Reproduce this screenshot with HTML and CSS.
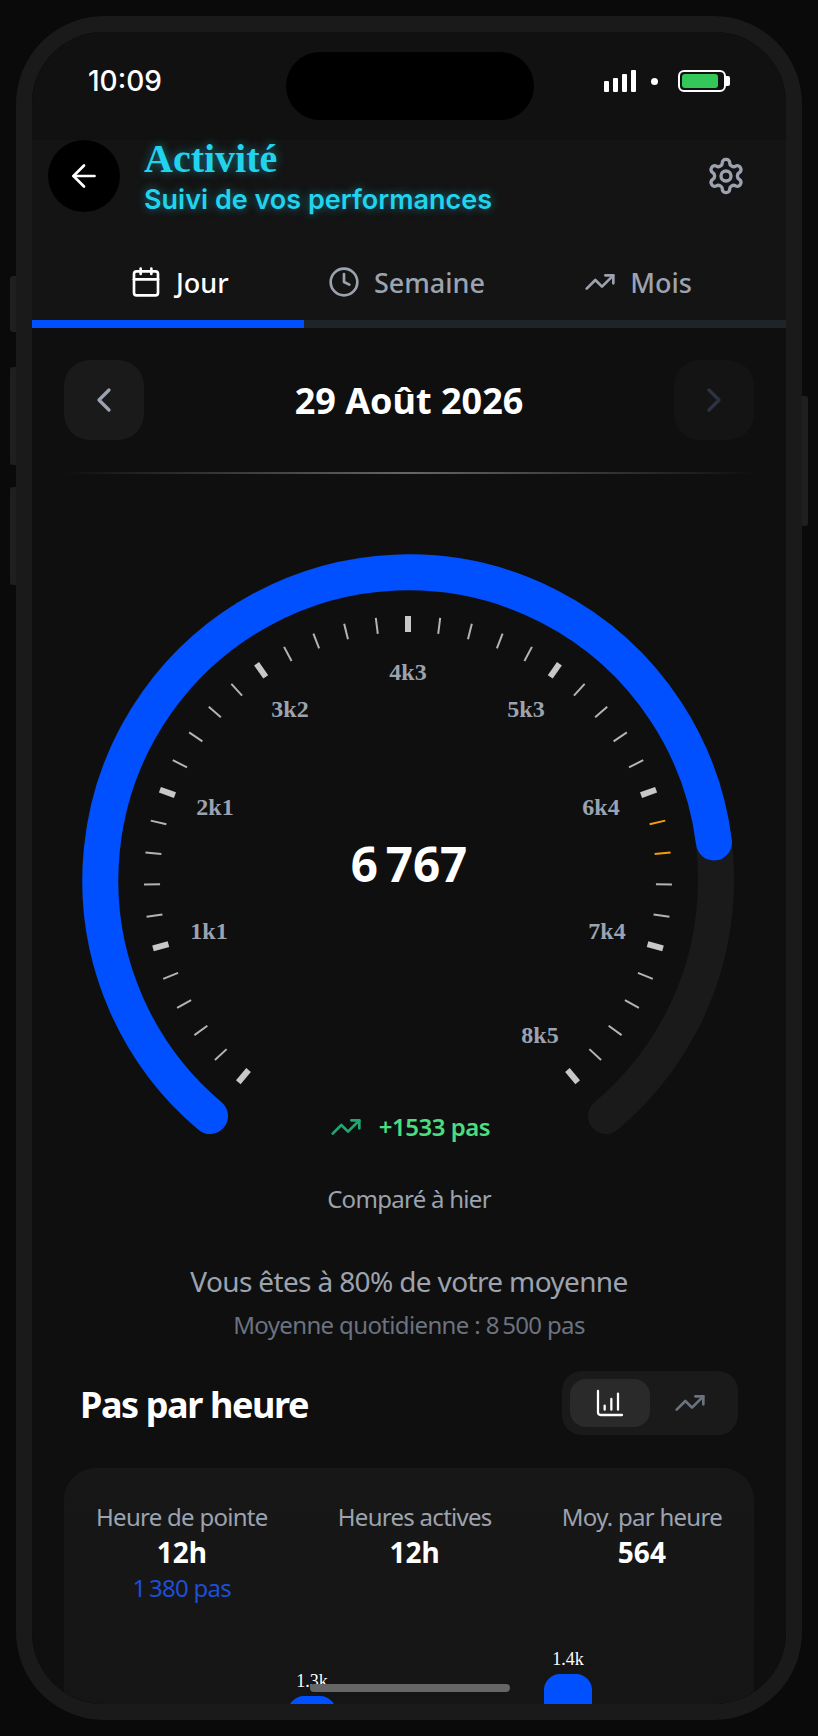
FILE: index.html
```html
<!DOCTYPE html>
<html lang="fr">
<head>
    <meta charset="UTF-8">
    <meta name="viewport" content="width=device-width, initial-scale=1.0">
    <link rel="stylesheet" href="styles.css">
    <title>Activité</title>
</head>
<body>
    <div class="phone">
        <span class="side-btn side-silent"></span>
        <span class="side-btn side-up"></span>
        <span class="side-btn side-down"></span>
        <span class="side-btn side-power"></span>
        <div class="screen">
            <div class="island"></div>
            <div class="home-bar"></div>

            <div class="status-bar">
                <span class="time">10:09</span>
                <div class="status-icons">
                    <svg class="signal" width="32" height="22" viewBox="0 0 32 22" fill="#fff">
                        <rect x="0" y="11" width="5" height="11" rx="1"/>
                        <rect x="9" y="8" width="5" height="14" rx="1"/>
                        <rect x="18" y="4" width="5" height="18" rx="1"/>
                        <rect x="27" y="0" width="5" height="22" rx="1"/>
                    </svg>
                    <span class="dot"></span>
                    <svg width="52" height="22" viewBox="0 0 52 22">
                        <rect x="1" y="1" width="46" height="20" rx="5" fill="none" stroke="#fff" stroke-width="2"/>
                        <rect x="4" y="4" width="36" height="14" rx="3" fill="#34c759"/>
                        <path d="M48 6h2a2 2 0 0 1 2 2v6a2 2 0 0 1-2 2h-2z" fill="#fff"/>
                    </svg>
                </div>
            </div>

            <div class="top-head">
                <button class="back-btn">
                    <svg width="36" height="36" viewBox="0 0 24 24" fill="none" stroke="#fff" stroke-width="1.8" stroke-linecap="round" stroke-linejoin="round">
                        <path d="M19 12H5"/><path d="M12 19l-7-7 7-7"/>
                    </svg>
                </button>
                <div class="head-titles">
                    <h1>Activité</h1>
                    <p>Suivi de vos performances</p>
                </div>
                <svg class="gear" width="40" height="40" viewBox="0 0 24 24" fill="none" stroke="#9ca3af" stroke-width="2" stroke-linecap="round" stroke-linejoin="round">
                    <path d="M12.22 2h-.44a2 2 0 0 0-2 2v.18a2 2 0 0 1-1 1.73l-.43.25a2 2 0 0 1-2 0l-.15-.08a2 2 0 0 0-2.73.73l-.22.38a2 2 0 0 0 .73 2.73l.15.1a2 2 0 0 1 1 1.72v.51a2 2 0 0 1-1 1.74l-.15.09a2 2 0 0 0-.73 2.73l.22.38a2 2 0 0 0 2.73.73l.15-.08a2 2 0 0 1 2 0l.43.25a2 2 0 0 1 1 1.73V20a2 2 0 0 0 2 2h.44a2 2 0 0 0 2-2v-.18a2 2 0 0 1 1-1.73l.43-.25a2 2 0 0 1 2 0l.15.08a2 2 0 0 0 2.73-.73l.22-.39a2 2 0 0 0-.73-2.73l-.15-.08a2 2 0 0 1-1-1.74v-.5a2 2 0 0 1 1-1.74l.15-.09a2 2 0 0 0 .73-2.73l-.22-.38a2 2 0 0 0-2.73-.73l-.15.08a2 2 0 0 1-2 0l-.43-.25a2 2 0 0 1-1-1.73V4a2 2 0 0 0-2-2z"/>
                    <circle cx="12" cy="12" r="3"/>
                </svg>
            </div>

            <div class="tabs">
                <div class="tab tab-active">
                    <svg width="32" height="32" viewBox="0 0 24 24" fill="none" stroke="currentColor" stroke-width="2" stroke-linecap="round" stroke-linejoin="round">
                        <path d="M8 2v4"/><path d="M16 2v4"/><rect x="3" y="4" width="18" height="18" rx="2"/><path d="M3 10h18"/>
                    </svg>
                    <span>Jour</span>
                </div>
                <div class="tab">
                    <svg width="32" height="32" viewBox="0 0 24 24" fill="none" stroke="currentColor" stroke-width="2" stroke-linecap="round" stroke-linejoin="round">
                        <circle cx="12" cy="12" r="10"/><path d="M12 6v6l4 2"/>
                    </svg>
                    <span>Semaine</span>
                </div>
                <div class="tab">
                    <svg width="32" height="32" viewBox="0 0 24 24" fill="none" stroke="currentColor" stroke-width="2" stroke-linecap="round" stroke-linejoin="round">
                        <path d="M22 7l-8.5 8.5-5-5L2 17"/><path d="M16 7h6v6"/>
                    </svg>
                    <span>Mois</span>
                </div>
            </div>
            <div class="tab-track"><div class="tab-fill"></div></div>

            <div class="date-nav">
                <button class="nav-btn">
                    <svg width="40" height="40" viewBox="0 0 24 24" fill="none" stroke="#9ca3af" stroke-width="2" stroke-linecap="round" stroke-linejoin="round"><path d="M15 18l-6-6 6-6"/></svg>
                </button>
                <div class="date-label">29 Août 2026</div>
                <button class="nav-btn nav-off">
                    <svg width="40" height="40" viewBox="0 0 24 24" fill="none" stroke="#2d3340" stroke-width="2" stroke-linecap="round" stroke-linejoin="round"><path d="M9 18l6-6-6-6"/></svg>
                </button>
            </div>
            <div class="divider"></div>

            <div class="gauge">
                <svg width="754" height="620" viewBox="32 520 754 620">
                    <path class="ring ring-track" d="M210 1116 A308 308 0 1 1 606 1116"/>
                    <path class="ring ring-value" d="M210 1116 A308 308 0 1 1 714 842.5"/>

                    <g class="tick major">
                        <line x1="408" y1="616" x2="408" y2="632" transform="rotate(-140 408 880)"/>
                        <line x1="408" y1="616" x2="408" y2="632" transform="rotate(-105 408 880)"/>
                        <line x1="408" y1="616" x2="408" y2="632" transform="rotate(-70 408 880)"/>
                        <line x1="408" y1="616" x2="408" y2="632" transform="rotate(-35 408 880)"/>
                        <line x1="408" y1="616" x2="408" y2="632"/>
                        <line x1="408" y1="616" x2="408" y2="632" transform="rotate(35 408 880)"/>
                        <line x1="408" y1="616" x2="408" y2="632" transform="rotate(70 408 880)"/>
                        <line x1="408" y1="616" x2="408" y2="632" transform="rotate(105 408 880)"/>
                        <line x1="408" y1="616" x2="408" y2="632" transform="rotate(140 408 880)"/>
                    </g>
                    <g class="tick minor">
                        <line x1="408" y1="616" x2="408" y2="632" transform="rotate(-133 408 880)"/>
                        <line x1="408" y1="616" x2="408" y2="632" transform="rotate(-126 408 880)"/>
                        <line x1="408" y1="616" x2="408" y2="632" transform="rotate(-119 408 880)"/>
                        <line x1="408" y1="616" x2="408" y2="632" transform="rotate(-112 408 880)"/>
                        <line x1="408" y1="616" x2="408" y2="632" transform="rotate(-98 408 880)"/>
                        <line x1="408" y1="616" x2="408" y2="632" transform="rotate(-91 408 880)"/>
                        <line x1="408" y1="616" x2="408" y2="632" transform="rotate(-84 408 880)"/>
                        <line x1="408" y1="616" x2="408" y2="632" transform="rotate(-77 408 880)"/>
                        <line x1="408" y1="616" x2="408" y2="632" transform="rotate(-63 408 880)"/>
                        <line x1="408" y1="616" x2="408" y2="632" transform="rotate(-56 408 880)"/>
                        <line x1="408" y1="616" x2="408" y2="632" transform="rotate(-49 408 880)"/>
                        <line x1="408" y1="616" x2="408" y2="632" transform="rotate(-42 408 880)"/>
                        <line x1="408" y1="616" x2="408" y2="632" transform="rotate(-28 408 880)"/>
                        <line x1="408" y1="616" x2="408" y2="632" transform="rotate(-21 408 880)"/>
                        <line x1="408" y1="616" x2="408" y2="632" transform="rotate(-14 408 880)"/>
                        <line x1="408" y1="616" x2="408" y2="632" transform="rotate(-7 408 880)"/>
                        <line x1="408" y1="616" x2="408" y2="632" transform="rotate(7 408 880)"/>
                        <line x1="408" y1="616" x2="408" y2="632" transform="rotate(14 408 880)"/>
                        <line x1="408" y1="616" x2="408" y2="632" transform="rotate(21 408 880)"/>
                        <line x1="408" y1="616" x2="408" y2="632" transform="rotate(28 408 880)"/>
                        <line x1="408" y1="616" x2="408" y2="632" transform="rotate(42 408 880)"/>
                        <line x1="408" y1="616" x2="408" y2="632" transform="rotate(49 408 880)"/>
                        <line x1="408" y1="616" x2="408" y2="632" transform="rotate(56 408 880)"/>
                        <line x1="408" y1="616" x2="408" y2="632" transform="rotate(63 408 880)"/>
                        <line x1="408" y1="616" x2="408" y2="632" transform="rotate(91 408 880)"/>
                        <line x1="408" y1="616" x2="408" y2="632" transform="rotate(98 408 880)"/>
                        <line x1="408" y1="616" x2="408" y2="632" transform="rotate(112 408 880)"/>
                        <line x1="408" y1="616" x2="408" y2="632" transform="rotate(119 408 880)"/>
                        <line x1="408" y1="616" x2="408" y2="632" transform="rotate(126 408 880)"/>
                        <line x1="408" y1="616" x2="408" y2="632" transform="rotate(133 408 880)"/>
                    </g>
                    <g class="tick near">
                        <line x1="408" y1="616" x2="408" y2="632" transform="rotate(77 408 880)"/>
                        <line x1="408" y1="616" x2="408" y2="632" transform="rotate(84 408 880)"/>
                    </g>

                    <g class="gauge-labels">
                        <text x="209" y="939">1k1</text>
                        <text x="215" y="815">2k1</text>
                        <text x="290" y="717">3k2</text>
                        <text x="408" y="680">4k3</text>
                        <text x="526" y="717">5k3</text>
                        <text x="601" y="815">6k4</text>
                        <text x="607" y="939">7k4</text>
                        <text x="540" y="1043">8k5</text>
                    </g>
                    <text class="gauge-value" x="409" y="882">6&#8239;767</text>
                </svg>
                <div class="delta">
                    <svg width="32" height="32" viewBox="0 0 24 24" fill="none" stroke="currentColor" stroke-width="2" stroke-linecap="round" stroke-linejoin="round">
                        <path d="M22 7l-8.5 8.5-5-5L2 17"/><path d="M16 7h6v6"/>
                    </svg>
                    <span>+1533 pas</span>
                </div>
                <div class="compare">Comparé à hier</div>
            </div>

            <div class="avg">
                <p class="avg-main">Vous êtes à 80% de votre moyenne</p>
                <p class="avg-sub">Moyenne quotidienne : 8&#8239;500 pas</p>
            </div>

            <div class="section-head">
                <h2>Pas par heure</h2>
                <div class="chart-toggle">
                    <div class="toggle-item toggle-on">
                        <svg width="32" height="32" viewBox="0 0 24 24" fill="none" stroke="#fff" stroke-width="1.7" stroke-linecap="round" stroke-linejoin="round">
                            <path d="M3 3v16a2 2 0 0 0 2 2h16"/><path d="M8 17v-3"/><path d="M13 17V9"/><path d="M18 17V5"/>
                        </svg>
                    </div>
                    <div class="toggle-item">
                        <svg width="32" height="32" viewBox="0 0 24 24" fill="none" stroke="#6b7280" stroke-width="2" stroke-linecap="round" stroke-linejoin="round">
                            <path d="M22 7l-8.5 8.5-5-5L2 17"/><path d="M16 7h6v6"/>
                        </svg>
                    </div>
                </div>
            </div>

            <div class="card">
                <div class="stats">
                    <div class="stat">
                        <div class="stat-name">Heure de pointe</div>
                        <div class="stat-val">12h</div>
                        <div class="stat-extra">1&#8239;380 pas</div>
                    </div>
                    <div class="stat">
                        <div class="stat-name">Heures actives</div>
                        <div class="stat-val">12h</div>
                    </div>
                    <div class="stat">
                        <div class="stat-name">Moy. par heure</div>
                        <div class="stat-val">564</div>
                    </div>
                </div>
                <div class="bars">
                    <div class="bar-col bar-short">
                        <span>1.3k</span>
                        <div class="bar"></div>
                    </div>
                    <div class="bar-col">
                        <span>1.4k</span>
                        <div class="bar"></div>
                    </div>
                </div>
            </div>
        </div>
    </div>
</body>
</html>
```
FILE: styles.css
```css
* {
    box-sizing: border-box;
}
html, body {
    margin: 0;
    height: 100%;
}
body {
    background: #0a0a0a;
    padding: 16px;
    font-family: "Noto Sans", "Open Sans", sans-serif;
    color: #fff;
}
p, h1, h2 {
    margin: 0;
}

/* phone shell */
.phone {
    position: relative;
    width: 786px;
    height: 1704px;
    border: 16px solid #1a1a1a;
    border-radius: 88px;
}
.side-btn {
    position: absolute;
    width: 6px;
    background: #1f1f1f;
    border-radius: 3px 0 0 3px;
}
.side-silent { left: -22px; top: 244px; height: 56px; }
.side-up { left: -22px; top: 335px; height: 98px; }
.side-down { left: -22px; top: 455px; height: 98px; }
.side-power { right: -22px; top: 364px; height: 130px; border-radius: 0 3px 3px 0; }

.screen {
    position: relative;
    height: 100%;
    background: #0f0f0f;
    border-radius: 72px;
    overflow: hidden;
}
.island {
    position: absolute;
    left: 254px;
    top: 20px;
    width: 248px;
    height: 68px;
    background: #000;
    border-radius: 34px;
}
.home-bar {
    position: absolute;
    left: 278px;
    top: 1652px;
    width: 200px;
    height: 8px;
    background: #666;
    border-radius: 4px;
    z-index: 2;
}

/* status bar */
.status-bar {
    display: flex;
    justify-content: space-between;
    align-items: center;
    height: 108px;
    padding: 0 56px 10px;
    background: #111;
}
.time {
    font-family: Inter, sans-serif;
    font-size: 28px;
    font-weight: 500;
}
.status-icons {
    display: flex;
    align-items: center;
    gap: 15px;
}
.dot {
    width: 7px;
    height: 7px;
    margin-right: 5px;
    background: #fff;
    border-radius: 50%;
}

/* header */
.top-head {
    display: flex;
    align-items: center;
    gap: 24px;
    padding: 0 40px 0 16px;
    background: #141414;
    height: 72px;
}
.back-btn {
    display: flex;
    align-items: center;
    justify-content: center;
    width: 72px;
    height: 72px;
    padding: 0;
    border: none;
    border-radius: 50%;
    background: #000;
    flex: none;
}
.head-titles {
    flex: 1;
    padding-top: 4px;
}
.head-titles h1 {
    font-family: "Liberation Serif", serif;
    font-size: 40px;
    font-weight: 700;
    line-height: 44px;
    color: #22d3ee;
    text-shadow: 0 0 10px rgba(34, 211, 238, 0.5);
}
.head-titles p {
    font-family: Inter, sans-serif;
    font-size: 27px;
    font-weight: 600;
    line-height: 38px;
    color: #22d3ee;
    text-shadow: 0 0 10px rgba(34, 211, 238, 0.5);
}

/* tabs */
.tabs {
    display: flex;
    justify-content: space-between;
    align-items: center;
    height: 108px;
    padding: 32px 94px 0 98px;
    background: #141414;
}
.tab {
    display: flex;
    align-items: center;
    gap: 14px;
    font-size: 27px;
    font-weight: 500;
    color: #9ca3af;
}
.tab-active {
    color: #fff;
}
.tab-track {
    height: 8px;
    background: #1f2428;
}
.tab-fill {
    width: 272px;
    height: 100%;
    background: #0050ff;
}

/* date */
.date-nav {
    display: flex;
    align-items: center;
    justify-content: space-between;
    padding: 32px 32px 0;
}
.nav-btn {
    display: flex;
    align-items: center;
    justify-content: center;
    width: 80px;
    height: 80px;
    padding: 0;
    border: none;
    border-radius: 26px;
    background: #1a1a1a;
}
.nav-off {
    background: #141414;
}
.date-label {
    font-size: 36px;
    font-weight: 700;
}
.divider {
    height: 2px;
    margin: 32px 32px 0;
    background: linear-gradient(90deg, transparent, #666, transparent);
}

/* gauge */
.gauge {
    display: flex;
    flex-direction: column;
    align-items: center;
    margin-top: 46px;
}
.gauge svg {
    display: block;
}
.ring {
    fill: none;
    stroke-width: 36;
    stroke-linecap: round;
}
.ring-track { stroke: #1a1a1a; }
.ring-value { stroke: #0050ff; }
.tick.major line { stroke: #c8c8c8; stroke-width: 6; }
.tick.minor line { stroke: #b4b4b4; stroke-width: 2; }
.tick.near line { stroke: #f59e0b; stroke-width: 2; }
.gauge-labels text {
    font-family: "Liberation Serif", serif;
    font-size: 24px;
    font-weight: 700;
    fill: #9ca3af;
    text-anchor: middle;
}
.gauge-value {
    font-family: "Noto Sans", sans-serif;
    font-size: 47.5px;
    font-weight: 700;
    fill: #fff;
    text-anchor: middle;
}
.delta {
    display: flex;
    align-items: center;
    gap: 17px;
    color: #4ade80;
    font-size: 24px;
    font-weight: 600;
    letter-spacing: -0.5px;
    margin-top: -30px;
    padding-left: 2px;
}
.delta svg {
    color: #22a772;
}
.compare {
    margin-top: 39px;
    font-size: 24px;
    letter-spacing: -0.03em;
    color: #9ca3af;
}

/* average */
.avg {
    margin-top: 47px;
    text-align: center;
    letter-spacing: -0.04em;
}
.avg-main {
    font-size: 28px;
    color: #9ca3af;
}
.avg-sub {
    margin-top: 8px;
    font-size: 24px;
    color: #6b7280;
}

/* chart section */
.section-head {
    display: flex;
    align-items: center;
    justify-content: space-between;
    padding: 0 48px;
    margin-top: 30px;
}
.section-head h2 {
    padding-top: 2px;
    font-size: 36px;
    font-weight: 700;
    letter-spacing: -1.4px;
}
.chart-toggle {
    display: flex;
    padding: 8px;
    background: #1a1a1a;
    border-radius: 20px;
}
.toggle-item {
    display: flex;
    align-items: center;
    justify-content: center;
    width: 80px;
    height: 48px;
    border-radius: 16px;
}
.toggle-on {
    background: #2a2a2a;
}
.card {
    margin: 33px 32px 0;
    height: 400px;
    padding: 32px 32px 0;
    background: linear-gradient(#171717, #141414);
    border-radius: 32px;
}
.stats {
    display: flex;
    justify-content: space-between;
    text-align: center;
}
.stat-name {
    font-size: 24px;
    letter-spacing: -0.03em;
    color: #9ca3af;
}
.stat-val {
    font-size: 28px;
    font-weight: 700;
}
.stat-extra {
    font-size: 24px;
    letter-spacing: -0.03em;
    color: #1d4ed8;
}
.bars {
    display: flex;
    align-items: flex-start;
    gap: 208px;
    padding-left: 192px;
    margin-top: 45px;
}
.bar-col {
    display: flex;
    flex-direction: column;
    align-items: center;
    gap: 4px;
    font-family: "Liberation Serif", serif;
    font-size: 18px;
}
.bar-short {
    margin-top: 22px;
}
.bar {
    width: 48px;
    height: 120px;
    background: #0050ff;
    border-radius: 16px 16px 0 0;
}
```
